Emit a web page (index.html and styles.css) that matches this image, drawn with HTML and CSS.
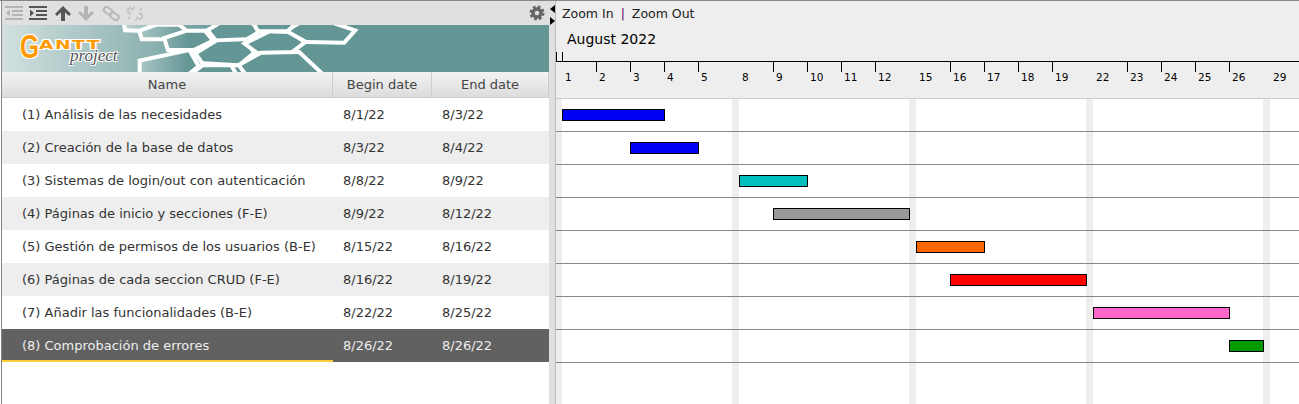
FILE: index.html
```html
<!DOCTYPE html>
<html lang="es">
<head>
    <meta charset="UTF-8">
    <title>GanttProject</title>
    <link rel="stylesheet" href="styles.css">
</head>
<body>
<div class="app">
    <div class="left-panel">
        <div class="toolbar">
            <svg class="tool tool-light" width="18" height="14" viewBox="0 0 18 14"><path d="M0 0h18v2H0zM7 4h11v2H7zM7 8h11v2H7zM0 12h18v2H0zM5 3.500v7L1 7z"/></svg>
            <svg class="tool tool-dark" width="18" height="14" viewBox="0 0 18 14"><path d="M0 0h18v2H0zM7 4h11v2H7zM7 8h11v2H7zM0 12h18v2H0zM1 3.500v7L5 7z"/></svg>
            <svg class="tool tool-dark tool-up" width="16" height="15" viewBox="0 0 16 15"><path d="M8 0l8 8-2 2-4-3.800V15H6V6.200L2 10 0 8z"/></svg>
            <svg class="tool tool-light tool-down" width="16" height="15" viewBox="0 0 16 15"><path d="M8 15l8-8-2-2-4 3.800V0H6v8.800L2 5 0 7z"/></svg>
            <svg class="tool tool-link" width="18" height="15" viewBox="0 0 18 15"><rect x="1.500" y="2" width="9" height="5.500" rx="2.700" transform="rotate(35 6 4.700)"/><rect x="8" y="7.500" width="9" height="5.500" rx="2.700" transform="rotate(35 12.500 10.200)"/></svg>
            <svg class="tool tool-unlink" width="18" height="15" viewBox="0 0 18 15"><path d="M7.500 4L5.500 2.500C3 1 .5 4 2.500 6.500L5 8.500M10.500 11l2 1.500c2.500 1.500 5-1.500 3-4L13 6.500M8 2.500V0M4 11l-2 1.500M13.500 4.500l2.500-2M10 13v2"/></svg>
            <svg class="gear" width="16" height="16" viewBox="0 0 18 18"><circle cx="9" cy="9" r="4.500"/><circle class="gear-teeth" cx="9" cy="9" r="7"/></svg>
        </div>
        <div class="banner">
            <svg class="honeycomb" width="547" height="47" viewBox="0 0 547 47">
                <defs>
                    <linearGradient id="fade" gradientUnits="userSpaceOnUse" x1="0" y1="0" x2="235" y2="0">
                        <stop offset="0" stop-color="#d2e1e0"/>
                        <stop offset="1" stop-color="#649696"/>
                    </linearGradient>
                </defs>
                <rect width="547" height="47" fill="url(#fade)"/>
                <g class="cells" transform="translate(108 -1) scale(0.3333)">
                    <polygon points="45,-20 145,-20 100,15 50,13"/>
                    <polygon points="100,40 95,24 140,8 205,8 222,22 160,40"/>
                    <polygon points="170,46 230,26 282,26 300,48 250,72 178,72"/>
                    <polygon points="302,20 335,0 420,0 442,20 400,45 322,45"/>
                    <polygon points="265,90 322,55 400,52 425,85 385,118 280,112"/>
                    <polygon points="415,60 480,28 540,30 575,55 540,82 445,82"/>
                    <polygon points="540,20 575,0 660,0 725,22 700,50 590,48"/>
                    <polygon points="395,125 455,92 565,90 640,160 420,160"/>
                    <polygon points="95,160 95,115 235,85 258,125 215,160"/>
                    <polygon points="240,160 280,130 360,130 378,160"/>
                    <polygon points="430,-20 570,-20 530,16 447,16"/>
                </g>
            </svg>
            <div class="logo">
                <span class="logo-g">G</span><span class="logo-antt">ANTT</span>
                <span class="logo-project">project</span>
            </div>
        </div>
        <div class="table-head">
            <div class="head-cell">Name</div>
            <div class="head-cell">Begin date</div>
            <div class="head-cell">End date</div>
        </div>
        <div class="task"><span class="task-name">(1) Análisis de las necesidades</span><span class="task-date">8/1/22</span><span class="task-date">8/3/22</span></div>
        <div class="task"><span class="task-name">(2) Creación de la base de datos</span><span class="task-date">8/3/22</span><span class="task-date">8/4/22</span></div>
        <div class="task"><span class="task-name">(3) Sistemas de login/out con autenticación</span><span class="task-date">8/8/22</span><span class="task-date">8/9/22</span></div>
        <div class="task"><span class="task-name">(4) Páginas de inicio y secciones (F-E)</span><span class="task-date">8/9/22</span><span class="task-date">8/12/22</span></div>
        <div class="task"><span class="task-name">(5) Gestión de permisos de los usuarios (B-E)</span><span class="task-date">8/15/22</span><span class="task-date">8/16/22</span></div>
        <div class="task"><span class="task-name">(6) Páginas de cada seccion CRUD (F-E)</span><span class="task-date">8/16/22</span><span class="task-date">8/19/22</span></div>
        <div class="task"><span class="task-name">(7) Añadir las funcionalidades (B-E)</span><span class="task-date">8/22/22</span><span class="task-date">8/25/22</span></div>
        <div class="task selected"><span class="task-name">(8) Comprobación de errores</span><span class="task-date">8/26/22</span><span class="task-date">8/26/22</span></div>
    </div>

    <div class="divider">
        <span class="arrow-left"></span>
        <span class="arrow-right"></span>
    </div>

    <div class="chart">
        <div class="chart-head">
            <div class="zoom-bar"><span>Zoom In</span><span class="zoom-sep">|</span><span>Zoom Out</span></div>
            <div class="month">August 2022</div>
            <div class="month-ticks"><span></span></div>
            <div class="days">
                <span class="day week-start">1</span><span class="day">2</span><span class="day">3</span><span class="day">4</span><span class="day">5</span>
                <span class="day week-start">8</span><span class="day">9</span><span class="day">10</span><span class="day">11</span><span class="day">12</span>
                <span class="day week-start">15</span><span class="day">16</span><span class="day">17</span><span class="day">18</span><span class="day">19</span>
                <span class="day week-start">22</span><span class="day">23</span><span class="day">24</span><span class="day">25</span><span class="day">26</span>
                <span class="day week-start">29</span>
            </div>
        </div>
        <div class="chart-body">
            <div class="chart-row"><div class="bar" style="margin-left:6px;width:103px;background:#0000f5"></div></div>
            <div class="chart-row"><div class="bar" style="margin-left:74px;width:69px;background:#0000f5"></div></div>
            <div class="chart-row"><div class="bar" style="margin-left:183px;width:69px;background:#00bfbf"></div></div>
            <div class="chart-row"><div class="bar" style="margin-left:217px;width:137px;background:#999999"></div></div>
            <div class="chart-row"><div class="bar" style="margin-left:360px;width:69px;background:#ff6600"></div></div>
            <div class="chart-row"><div class="bar" style="margin-left:394px;width:137px;background:#ff0000"></div></div>
            <div class="chart-row"><div class="bar" style="margin-left:537px;width:137px;background:#ff66cc"></div></div>
            <div class="chart-row"><div class="bar" style="margin-left:673px;width:35px;background:#009900"></div></div>
        </div>
    </div>
</div>
</body>
</html>
```

FILE: styles.css
```css
html, body {
    margin: 0;
    height: 100%;
    overflow: hidden;
    background: #fff;
}
body {
    font-family: "DejaVu Sans", sans-serif;
    font-size: 13px;
    color: #333;
}
.app {
    display: flex;
    height: 404px;
    border-top: 1px solid #888;
    box-sizing: border-box;
}

/* left side */
.left-panel {
    width: 547px;
    margin-left: 1px;
    border-left: 1px solid #888;
    flex: none;
}
.toolbar {
    display: flex;
    align-items: center;
    height: 24px;
    padding: 0 4px 0 3px;
    background: #e0e0e0;
    box-sizing: border-box;
}
.tool {
    flex: none;
    margin-right: 6px;
}
.tool-light {
    fill: #b4b4b4;
}
.tool-dark {
    fill: #555;
}
.tool-up {
    margin-left: 2px;
    margin-right: 7px;
}
.tool-down {
    margin-right: 8px;
}
.tool-link, .tool-unlink {
    fill: none;
    stroke: #b8b8b8;
    stroke-width: 2;
}
.tool-unlink {
    stroke: #c4c4c4;
}
.gear {
    margin-left: auto;
    flex: none;
}
.gear circle {
    fill: none;
    stroke: #666;
    stroke-width: 4;
}
.gear .gear-teeth {
    stroke-width: 3;
    stroke-dasharray: 3 2.500;
}
.banner {
    position: relative;
    height: 47px;
    overflow: hidden;
    background: #649696;
}
.honeycomb {
    display: block;
}
.cells polygon {
    fill: url(#fade);
    stroke: #fff;
    stroke-width: 24;
    paint-order: stroke;
}
.logo {
    position: absolute;
    left: 18px;
    top: 3px;
    width: 110px;
    height: 42px;
    color: #f90;
    text-shadow: 1px 1px 0 #fff, -1px -1px 0 #fff, 1px -1px 0 #fff, -1px 1px 0 #fff;
}
.logo-g {
    position: absolute;
    left: 0;
    top: -1px;
    font-family: "Liberation Sans", sans-serif;
    font-size: 34px;
    font-weight: bold;
    line-height: 38px;
    transform: scaleX(0.720);
    transform-origin: left;
}
.logo-antt {
    position: absolute;
    left: 19px;
    top: 13px;
    font-size: 12px;
    font-weight: bold;
    line-height: 9px;
    letter-spacing: 1px;
    transform: scaleX(1.550);
    transform-origin: left;
}
.logo-project {
    position: absolute;
    left: 50px;
    top: 24px;
    font-family: "Liberation Serif", serif;
    font-style: italic;
    font-size: 17px;
    line-height: 8px;
    color: #555;
}
.table-head {
    display: grid;
    grid-template-columns: 331px 99px 117px;
    height: 26px;
    border-bottom: 1px solid #ccc;
    box-sizing: border-box;
}
.head-cell {
    display: flex;
    align-items: center;
    justify-content: center;
    background: linear-gradient(#f3f3f3, #dcdcdc);
    border-right: 1px solid #ccc;
    color: #444;
    box-sizing: border-box;
}
.task {
    display: grid;
    grid-template-columns: 331px 99px 117px;
    height: 33px;
    line-height: 33px;
    white-space: nowrap;
}
.task:nth-of-type(odd) {
    background: #eee;
}
.task-name {
    padding-left: 20px;
}
.task-date {
    padding-left: 10px;
}
.task.selected {
    background: #616161;
    color: #eee;
}
.task.selected .task-name {
    height: 33px;
    border-bottom: 2px solid #fc3;
    box-sizing: border-box;
}

/* splitter */
.divider {
    position: relative;
    flex: none;
    width: 7px;
    background: #e0e0e0;
    border-right: 1px solid #bbb;
    box-sizing: border-box;
    height: 403px;
}
.arrow-left, .arrow-right {
    position: absolute;
    left: 1px;
    width: 0;
    height: 0;
    border-top: 4px solid transparent;
    border-bottom: 4px solid transparent;
}
.arrow-left {
    top: 4px;
    border-right: 5px solid #000;
}
.arrow-right {
    top: 16px;
    border-left: 5px solid #000;
}

/* chart side */
.chart {
    flex: 1;
    min-width: 0;
}
.chart-head {
    height: 97px;
    background: #eee;
    border-bottom: 1px solid #ccc;
    color: #000;
}
.zoom-bar {
    display: flex;
    gap: 6px;
    height: 24px;
    line-height: 25px;
    padding-left: 6px;
    color: #222;
    font-size: 12.500px;
}
.zoom-sep {
    color: #606;
    margin: 0 1px;
}
.month {
    height: 27px;
    line-height: 28px;
    padding-left: 11px;
    font-size: 14px;
}
.month-ticks {
    height: 9px;
    border-bottom: 1px solid #000;
}
.month-ticks span {
    display: block;
    width: 5px;
    height: 9px;
    border-left: 1px solid #000;
    border-right: 1px solid #000;
}
.days {
    display: flex;
    padding-left: 6px;
    font-size: 10.500px;
    white-space: nowrap;
}
.day {
    flex: none;
    box-sizing: border-box;
    width: 34px;
    height: 10px;
    line-height: 30px;
    padding-left: 2px;
    border-left: 1px solid #000;
}
.week-start {
    border-left-color: transparent;
}
.week-start:not(:first-child) {
    margin-left: 7px;
}
.chart-body {
    height: 305px;
    background: linear-gradient(90deg, #eee 7px, #fff 7px) -1px 0 / 177px 100%;
}
.chart-row {
    height: 33px;
    padding-top: 10px;
    border-bottom: 1px solid #888;
    box-sizing: border-box;
}
.bar {
    height: 12px;
    border: 1px solid #000;
    box-sizing: border-box;
}
```
